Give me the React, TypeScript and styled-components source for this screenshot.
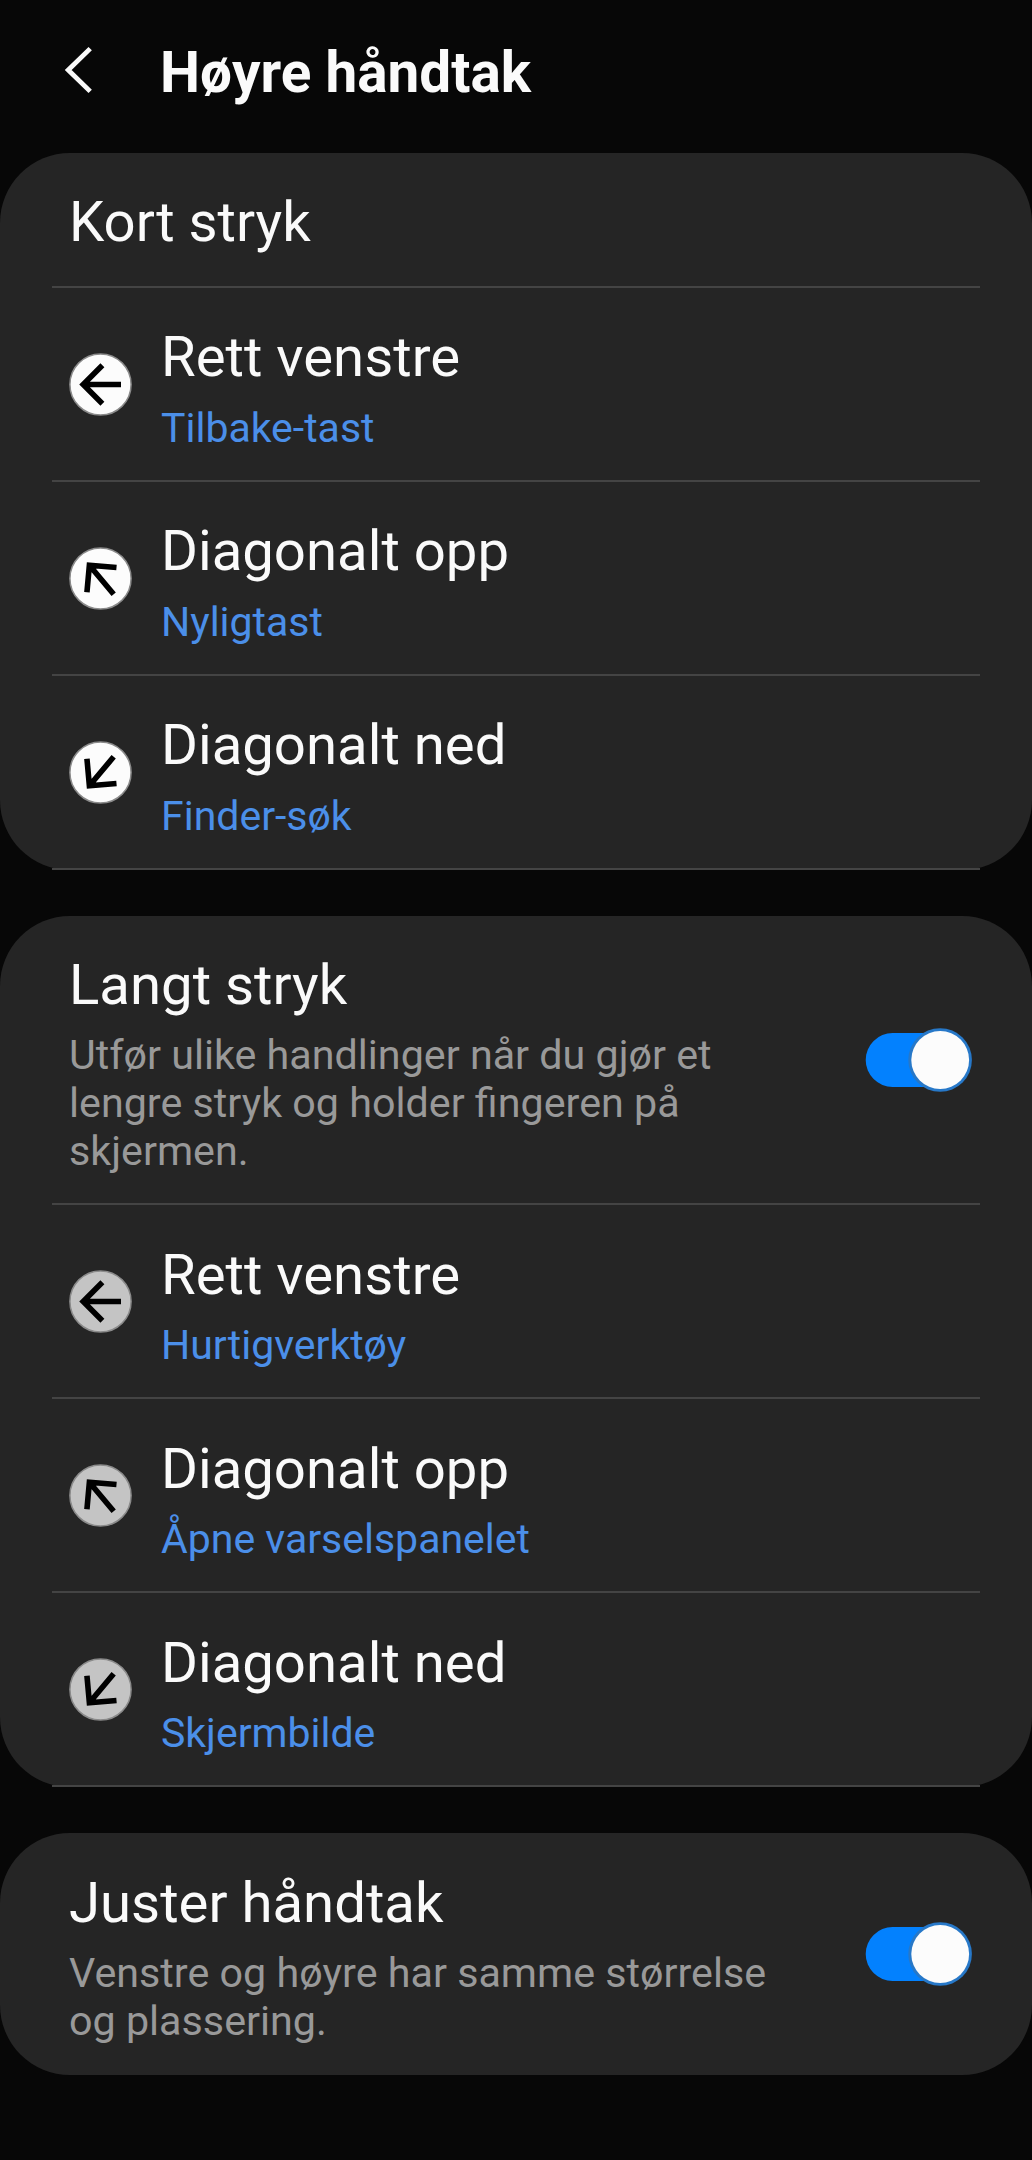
import React from "react";
import styled, { createGlobalStyle } from "styled-components";

const GlobalStyle = createGlobalStyle`
  * { box-sizing: border-box; }
  body {
    margin: 0;
    background: #070707;
    font-family: Roboto, "Noto Sans", sans-serif;
    color: #fafafa;
  }
`;

const Screen = styled.main`
  width: 1032px;
  min-height: 2160px;
  background: #070707;
`;

const Header = styled.header`
  height: 153px;
  display: flex;
  align-items: flex-start;
  padding: 39px 0 0 64px;
`;

const BackButton = styled.button`
  width: 96px;
  height: 62px;
  padding: 0;
  border: 0;
  background: none;
  display: flex;
  align-items: center;
`;

const PageTitle = styled.h1`
  margin: 0;
  font-size: 56.7px;
  line-height: 67px;
  font-weight: 700;
`;

const Cards = styled.div`
  display: flex;
  flex-direction: column;
  gap: 46px;
`;

const Card = styled.section`
  background: #252525;
  border-radius: 70px;
`;

const Divider = styled.div`
  height: 2px;
  margin: 0 52px;
  background: #444;
`;

const SectionHead = styled.div<{ $bottom: number }>`
  display: flex;
  align-items: center;
  justify-content: space-between;
  padding: 0 60px 0 69px;
  & > :first-child {
    padding: 36px 0 ${(p) => p.$bottom}px;
  }
`;

const Label = styled.h2<{ $drop?: number }>`
  margin: ${(p) => p.$drop ?? 0}px 0 ${(p) => -(p.$drop ?? 0)}px;
  font-size: 56.3px;
  line-height: 67px;
  font-weight: 400;
  white-space: nowrap;
`;

const Description = styled.p<{ $gap: number }>`
  margin: ${(p) => p.$gap}px 0 0;
  width: 720px;
  font-size: 41.25px;
  line-height: 48px;
  color: #999;
`;

const Row = styled.div`
  height: 192px;
  display: flex;
  align-items: center;
  gap: 29px;
  padding-left: 69px;
`;

const RowText = styled.div`
  padding-top: 8px;
`;

const Value = styled.div`
  margin-top: 13px;
  font-size: 41px;
  line-height: 48px;
  color: #4b8fe9;
  white-space: nowrap;
`;

const Switch = styled.div`
  width: 107px;
  height: 64px;
  display: flex;
  align-items: center;
`;

type Direction = "left" | "up" | "down";
const angles: Record<Direction, number> = { left: 0, up: 50, down: -50 };

function ArrowIcon({ direction, dim }: { direction: Direction; dim: boolean }) {
  return (
    <svg width="63" height="63" viewBox="0 0 63 63">
      <circle cx="31.5" cy="31.5" r="30.6" fill={dim ? "#c4c4c4" : "#fcfcfc"} stroke="#8a8a8a" strokeWidth="1.5" />
      <g transform={`rotate(${angles[direction]} 31.5 31.5)`} fill="none" stroke="#000" strokeWidth="5.6">
        <path d="M33.4 12.2 L14.2 31.5 L33.4 50.8 M14.2 31.5 H52" />
      </g>
    </svg>
  );
}

function Toggle() {
  return (
    <Switch role="switch" aria-checked="true">
      <svg width="107" height="64" viewBox="0 0 107 64">
        <rect x="0.7" y="5" width="100" height="54" rx="27" fill="#0381fe" />
        <circle cx="75.1" cy="32" r="31.8" fill="#2778c8" />
        <circle cx="75.2" cy="32" r="28.9" fill="#fcfcfc" />
      </svg>
    </Switch>
  );
}

interface Gesture {
  direction: Direction;
  name: string;
  value: string;
}

const shortSwipe: Gesture[] = [
  { direction: "left", name: "Rett venstre", value: "Tilbake-tast" },
  { direction: "up", name: "Diagonalt opp", value: "Nyligtast" },
  { direction: "down", name: "Diagonalt ned", value: "Finder-søk" },
];

const longSwipe: Gesture[] = [
  { direction: "left", name: "Rett venstre", value: "Hurtigverktøy" },
  { direction: "up", name: "Diagonalt opp", value: "Åpne varselspanelet" },
  { direction: "down", name: "Diagonalt ned", value: "Skjermbilde" },
];

function GestureList({ items, dim = false }: { items: Gesture[]; dim?: boolean }) {
  return (
    <>
      <Divider />
      {items.map((item) => (
        <React.Fragment key={item.direction}>
          <Row>
            <ArrowIcon direction={item.direction} dim={dim} />
            <RowText>
              <Label as="h3" $drop={dim ? 1 : 0}>
                {item.name}
              </Label>
              <Value>{item.value}</Value>
            </RowText>
          </Row>
          <Divider />
        </React.Fragment>
      ))}
    </>
  );
}

export default function App() {
  return (
    <Screen>
      <GlobalStyle />
      <Header>
        <BackButton aria-label="Tilbake">
          <svg width="30" height="48" viewBox="0 0 30 48" fill="none">
            <path d="M26.2 2.6 L4.2 24 L26.2 45.4" stroke="#fafafa" strokeWidth="4.8" />
          </svg>
        </BackButton>
        <PageTitle>Høyre håndtak</PageTitle>
      </Header>
      <Cards>
        <Card>
          <SectionHead $bottom={30}>
            <Label>Kort stryk</Label>
          </SectionHead>
          <GestureList items={shortSwipe} />
        </Card>
        <Card>
          <SectionHead $bottom={28}>
            <div>
              <Label>Langt stryk</Label>
              <Description $gap={12}>
                Utfør ulike handlinger når du gjør et
                <br />
                lengre stryk og holder fingeren på
                <br />
                skjermen.
              </Description>
            </div>
            <Toggle />
          </SectionHead>
          <GestureList items={longSwipe} dim />
        </Card>
        <Card>
          <SectionHead $bottom={30}>
            <div>
              <Label $drop={1}>Juster håndtak</Label>
              <Description $gap={13}>
                Venstre og høyre har samme størrelse
                <br />
                og plassering.
              </Description>
            </div>
            <Toggle />
          </SectionHead>
        </Card>
      </Cards>
    </Screen>
  );
}
